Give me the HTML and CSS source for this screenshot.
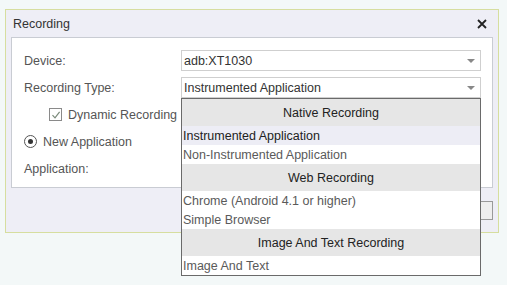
FILE: index.html
```html
<!DOCTYPE html>
<html>
<head>
    <title>Recording</title>
    <link rel="stylesheet" href="styles.css">
</head>
<body>
    <div class="dialog">
        <div class="dialog-header">
            <span class="dialog-title">Recording</span>
            <svg class="dialog-close" width="10" height="10" viewBox="0 0 10 10"><path d="M1 1 L9 9 M9 1 L1 9" stroke="#222" stroke-width="1.8"/></svg>
        </div>
        <div class="panel">
            <div class="form-row">
                <span class="label">Device:</span>
                <div class="select">
                    <span>adb:XT1030</span>
                    <span class="arrow"></span>
                </div>
            </div>
            <div class="form-row">
                <span class="label">Recording Type:</span>
                <div class="select">
                    <span>Instrumented Application</span>
                    <span class="arrow"></span>
                    <div class="dropdown">
                        <div class="group">Native Recording</div>
                        <div class="option selected">Instrumented Application</div>
                        <div class="option">Non-Instrumented Application</div>
                        <div class="group">Web Recording</div>
                        <div class="option">Chrome (Android 4.1 or higher)</div>
                        <div class="option">Simple Browser</div>
                        <div class="group">Image And Text Recording</div>
                        <div class="option">Image And Text</div>
                    </div>
                </div>
            </div>
            <div class="form-row indent">
                <span class="checkbox">
                    <svg width="10" height="10" viewBox="0 0 10 10"><path d="M1.5 5.2 L4 7.8 L8.6 1.8" fill="none" stroke="#7a8a7a" stroke-width="1.2"/></svg>
                </span>
                <span class="option-label">Dynamic Recording</span>
            </div>
            <div class="form-row">
                <span class="radio"><span class="radio-dot"></span></span>
                <span class="option-label">New Application</span>
            </div>
            <div class="form-row">
                <span class="label">Application:</span>
            </div>
        </div>
        <div class="dialog-footer">
            <button class="btn">Start</button>
        </div>
    </div>
</body>
</html>
```

FILE: styles.css
```css
html {
    height: 100%;
}

body {
    font-family: "Liberation Sans", Arial, sans-serif;
    font-size: 12.5px;
    color: #555;
    margin: 0;
    padding: 9px 0 0 5px;
    min-height: 100%;
    box-sizing: border-box;
    background-color: #f3f8f8;
}

.dialog {
    width: 492px;
    height: 222px;
    border: 1px solid #d6de9f;
    background-color: #eeeef6;
    display: flex;
    flex-direction: column;
}

.dialog-header {
    height: 27px;
    display: flex;
    justify-content: space-between;
    align-items: center;
    padding: 0 11px 0 7px;
}

.dialog-title {
    color: #333;
}

.panel {
    margin: 0 5px;
    height: 140px;
    padding: 9px 11px 0 12px;
    background: #fff;
    border: 1px solid #c9ccd3;
}

.form-row {
    height: 27px;
    display: flex;
    align-items: center;
}

.form-row.indent {
    padding-left: 25px;
}

.label {
    width: 157px;
}

.select {
    position: relative;
    width: 296px;
    height: 19px;
    border: 1px solid #cfcfcf;
    padding-left: 2px;
    display: flex;
    align-items: center;
    justify-content: space-between;
    color: #333;
    background: #fff;
}

.arrow {
    width: 0;
    height: 0;
    margin-right: 5px;
    border-left: 4px solid transparent;
    border-right: 4px solid transparent;
    border-top: 4px solid #888;
}

.dropdown {
    position: absolute;
    left: -1px;
    top: 20px;
    width: 298px;
    border: 1px solid #6a6a6a;
    background: #fff;
    z-index: 5;
}

.group {
    height: 27px;
    line-height: 28px;
    text-align: center;
    background: #e6e6e6;
    color: #222;
}

.option {
    height: 19px;
    line-height: 20px;
    padding-left: 1px;
    color: #5a5a5a;
}

.option.selected {
    background: #ededf5;
    color: #222;
}

.checkbox {
    width: 11px;
    height: 11px;
    border: 1px solid #8a8a8a;
    display: flex;
    align-items: center;
    justify-content: center;
    margin-right: 6px;
}

.radio {
    width: 11px;
    height: 11px;
    border: 1px solid #555;
    border-radius: 50%;
    display: flex;
    align-items: center;
    justify-content: center;
    margin-right: 6px;
}

.radio-dot {
    width: 5px;
    height: 5px;
    border-radius: 50%;
    background: #333;
}

.dialog-footer {
    flex: 1;
    display: flex;
    justify-content: flex-end;
    align-items: center;
    padding-right: 5px;
}

.btn {
    width: 80px;
    height: 19px;
    border: 1px solid #999;
    background: #eee;
    font-family: inherit;
    font-size: 12px;
}
```
